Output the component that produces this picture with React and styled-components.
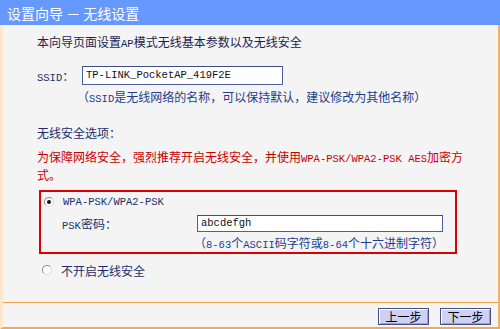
import React from 'react'
import styled, { createGlobalStyle } from 'styled-components';

const GlobalStyle = createGlobalStyle`
    html, body {
        margin: 0;
        padding: 0;
        background: #f4f4f4;
    }
    * {
        box-sizing: border-box;
    }
`;

const Page = styled.div`
    width: 500px;
    height: 329px;
    display: flex;
    flex-direction: column;
    background: #f4f4f4;
    font-family: "Noto Sans CJK SC", "Liberation Sans", sans-serif;
    font-size: 12px;
    color: #1c2f6c;
`;

const TitleBar = styled.div`
    height: 25px;
    flex: none;
    display: flex;
    align-items: center;
    padding-left: 7px;
    background: #6699ff;
    color: #ffffff;
    font-size: 14px;
`;

const Frame = styled.div`
    flex: 1;
    display: flex;
    flex-direction: column;
    border-left: 3px solid #fde8cc;
    border-right: 2px solid #f2b366;
    border-bottom: 2px solid #f5a84c;
`;

const Content = styled.div`
    flex: 1;
    display: flex;
    flex-direction: column;
    padding: 8px 0 0 34px;
`;

const Line = styled.div`
    height: 18px;
    line-height: 18px;
    margin-top: ${(p) => p.$mt || 0}px;
    margin-left: ${(p) => p.$ml || 0}px;
    color: ${(p) => p.$color || '#1c2f6c'};
    white-space: nowrap;
`;

const Ascii = styled.span`
    font-family: "Liberation Mono", monospace;
    font-size: 10.5px;
    line-height: 1;
`;

const Row = styled.div`
    display: flex;
    align-items: center;
    height: ${(p) => p.$h || 20}px;
    margin-top: ${(p) => p.$mt || 0}px;
    padding-left: ${(p) => p.$pl || 0}px;
`;

const Label = styled.div`
    width: ${(p) => p.$w}px;
    flex: none;
    padding-left: ${(p) => p.$pl || 0}px;
    white-space: nowrap;
`;

const Input = styled.div`
    width: ${(p) => p.$w}px;
    height: ${(p) => p.$h}px;
    display: flex;
    align-items: center;
    padding-left: 3px;
    background: #ffffff;
    border: 1px solid #4c5e9e;
    border-top-color: #3d4d8a;
    color: #111;
    font-family: "Liberation Mono", monospace;
    font-size: 10.5px;
`;

const Warning = styled.div`
    margin-top: 6px;
    line-height: 18px;
    color: #c80000;
    white-space: nowrap;
`;

const SecurityBox = styled.div`
    width: 418px;
    height: 64px;
    margin: 6px 0 0 2px;
    border: 2px solid #d80000;
    padding: 1px 0 0 3px;
    display: flex;
    flex-direction: column;
`;

const Radio = styled.span`
    width: 10px;
    height: 10px;
    flex: none;
    margin-right: 9px;
    border-radius: 50%;
    border: 1px solid #8a8a8a;
    border-right-color: #d8d8d8;
    border-bottom-color: #d8d8d8;
    background: #ffffff;
    display: flex;
    align-items: center;
    justify-content: center;

    &::after {
        content: '';
        width: 4px;
        height: 4px;
        border-radius: 50%;
        background: ${(p) => (p.$checked ? '#111' : 'transparent')};
    }
`;

const Footer = styled.div`
    height: 25px;
    flex: none;
    border-top: 1px solid #f0a448;
    display: flex;
    align-items: center;
    justify-content: flex-end;
    gap: 11px;
    padding: 2px 7px 0 0;
`;

const Button = styled.div`
    width: 51px;
    height: 17px;
    display: flex;
    align-items: center;
    justify-content: center;
    background: #cdd1f6;
    border: 1px solid #4a4f7a;
    box-shadow: inset 1px 1px 0 #ffffff, inset -1px -1px 0 #9aa0cc;
    color: #000;
    font-size: 12px;
`;

const App = () => {
    return (
        <Page>
            <GlobalStyle />
            <TitleBar>设置向导 － 无线设置</TitleBar>
            <Frame>
                <Content>
                    <Line $color="#1a2452">
                        本向导页面设置<Ascii>AP</Ascii>模式无线基本参数以及无线安全
                    </Line>
                    <Row $mt={14}>
                        <Label $w={45}><Ascii>SSID</Ascii>：</Label>
                        <Input $w={201} $h={19}>TP-LINK_PocketAP_419F2E</Input>
                    </Row>
                    <Line $mt={3} $ml={40} $color="#1f3d8e">
                        （<Ascii>SSID</Ascii>是无线网络的名称，可以保持默认，建议修改为其他名称）
                    </Line>
                    <Line $mt={18}>无线安全选项：</Line>
                    <Warning>
                        为保障网络安全，强烈推荐开启无线安全，并使用<Ascii>WPA-PSK/WPA2-PSK AES</Ascii>加密方<br />式。
                    </Warning>
                    <SecurityBox>
                        <Row $h={18}>
                            <Radio $checked />
                            <Ascii>WPA-PSK/WPA2-PSK</Ascii>
                        </Row>
                        <Row $h={22} $mt={2}>
                            <Label $w={153} $pl={18}><Ascii>PSK</Ascii>密码：</Label>
                            <Input $w={246} $h={17}>abcdefgh</Input>
                        </Row>
                        <Line $ml={150} $color="#1f3d8e">
                            （<Ascii>8-63</Ascii>个<Ascii>ASCII</Ascii>码字符或<Ascii>8-64</Ascii>个十六进制字符）
                        </Line>
                    </SecurityBox>
                    <Row $h={20} $mt={6} $pl={5}>
                        <Radio />
                        不开启无线安全
                    </Row>
                </Content>
                <Footer>
                    <Button>上一步</Button>
                    <Button>下一步</Button>
                </Footer>
            </Frame>
        </Page>
    )
}

export default App
